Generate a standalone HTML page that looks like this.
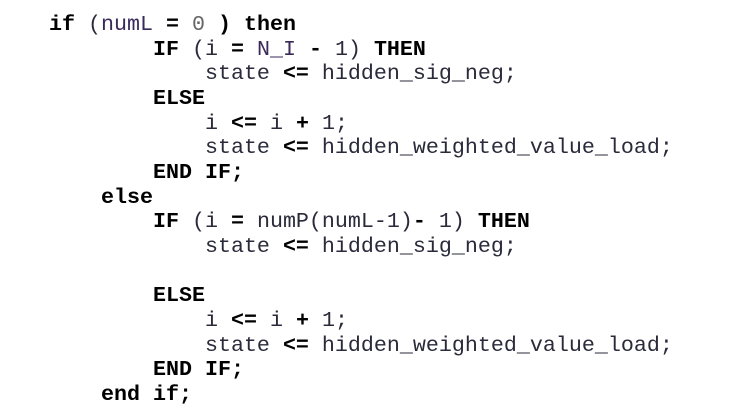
<!DOCTYPE html>
<html><head><style>
html,body{margin:0;background:#fff;width:747px;height:417px;overflow:hidden}
pre{position:absolute;left:49px;top:13px;margin:0;font-family:"Liberation Mono",monospace;font-size:21.67px;line-height:24.65px;color:#2a2a3a}
b{color:#000}
.p{color:#3a2a5a}.g{color:#666}
</style></head><body>
<pre><b>if</b> (<span class="p">numL</span> <b>=</b> <span class="g">0</span> <b>)</b> <b>then</b>
        <b>IF</b> (i <b>=</b> <span class="p">N_I</span> <b>-</b> 1) <b>THEN</b>
            state <b>&lt;=</b> hidden_sig_neg;
        <b>ELSE</b>
            i <b>&lt;=</b> i <b>+</b> 1;
            state <b>&lt;=</b> hidden_weighted_value_load;
        <b>END IF;</b>
    <b>else</b>
        <b>IF</b> (i <b>=</b> numP(numL-1)<b>-</b> 1) <b>THEN</b>
            state <b>&lt;=</b> hidden_sig_neg;

        <b>ELSE</b>
            i <b>&lt;=</b> i <b>+</b> 1;
            state <b>&lt;=</b> hidden_weighted_value_load;
        <b>END IF;</b>
    <b>end if;</b></pre>
</body></html>
